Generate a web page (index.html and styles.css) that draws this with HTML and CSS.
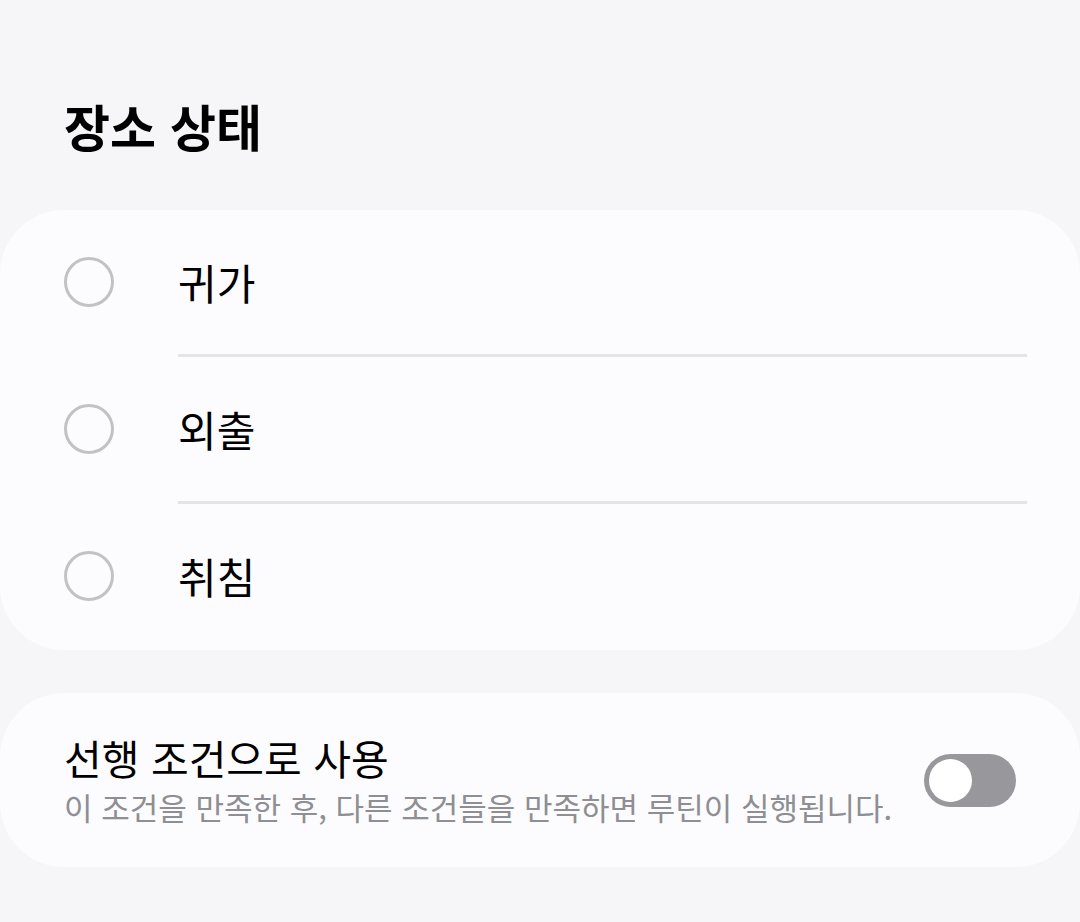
FILE: index.html
```html
<!DOCTYPE html>
<html lang="ko">
<head>
<meta charset="utf-8">
<link rel="stylesheet" href="styles.css">
</head>
<body>
<main class="page">
  <h1 class="title">장소 상태</h1>
  <section class="card list">
    <div class="row"><span class="radio"></span><span class="label">귀가</span></div>
    <div class="divider"></div>
    <div class="row"><span class="radio"></span><span class="label">외출</span></div>
    <div class="divider"></div>
    <div class="row"><span class="radio"></span><span class="label">취침</span></div>
  </section>
  <section class="card setting">
    <div class="setting-text">
      <div class="setting-title">선행 조건으로 사용</div>
      <div class="setting-sub">이 조건을 만족한 후, 다른 조건들을 만족하면 루틴이 실행됩니다.</div>
    </div>
    <div class="toggle"><span class="thumb"></span></div>
  </section>
</main>
</body>
</html>
```

FILE: styles.css
```css
* { box-sizing: border-box; }
html, body {
  margin: 0;
  padding: 0;
  background: #f6f6f8;
  font-family: "Noto Sans CJK KR", "Noto Sans", sans-serif;
  color: #000;
}
.page {
  width: 1080px;
  height: 922px;
  padding-top: 88px;
  display: flex;
  flex-direction: column;
}
.title {
  margin: 0 0 0 64px;
  font-size: 50px;
  font-weight: 700;
  line-height: 74px;
  height: 122px;
}
.card {
  background: #fcfcfe;
  border-radius: 64px;
}
.list {
  display: flex;
  flex-direction: column;
  padding-bottom: 2px;
}
.row {
  height: 144px;
  display: flex;
  align-items: center;
  padding-left: 64px;
}
.radio {
  width: 50px;
  height: 50px;
  border: 3px solid #c2c2c6;
  border-radius: 50%;
  flex: none;
}
.label {
  margin-left: 64px;
  font-size: 42px;
  line-height: 1;
}
.divider {
  height: 3px;
  background: #e4e4e6;
  margin-left: 178px;
  margin-right: 53px;
}
.setting {
  margin-top: 43px;
  height: 174px;
  display: flex;
  align-items: center;
  padding: 0 64px;
}
.setting-text {
  flex: 1;
  display: flex;
  flex-direction: column;
  gap: 6px;
  padding-bottom: 2px;
}
.setting-title {
  font-size: 41px;
  line-height: 50px;
}
.setting-sub {
  font-size: 31px;
  line-height: 38px;
  color: #8e8e93;
}
.toggle {
  width: 92px;
  height: 53px;
  border-radius: 27px;
  background: #98979c;
  padding: 5px;
  display: flex;
  align-items: center;
  flex: none;
}
.thumb {
  width: 43px;
  height: 43px;
  border-radius: 50%;
  background: #fff;
}
```
